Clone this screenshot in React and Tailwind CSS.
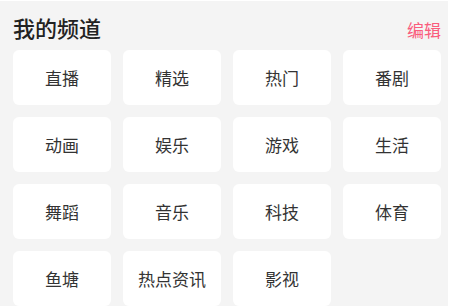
const channels = [
  "直播", "精选", "热门", "番剧",
  "动画", "娱乐", "游戏", "生活",
  "舞蹈", "音乐", "科技", "体育",
  "鱼塘", "热点资讯", "影视",
]

export default function App() {
  return (
    <div className="w-[450px] h-[308px] bg-white pt-[1px] pr-[2px] pb-[2px] overflow-hidden">
      <div
        className="h-full bg-[#f4f4f4] pl-[13px] pr-[7px] pt-[11px] overflow-hidden"
        style={{ fontFamily: '"Noto Sans CJK SC", "Noto Sans", sans-serif' }}
      >
        {/* header */}
        <div className="flex items-baseline justify-between">
          <h2 className="text-[22px] leading-[30px] font-medium text-[#222]">我的频道</h2>
          <button className="text-[17px] leading-[24px] text-[#fa5c7c]">编辑</button>
        </div>

        {/* channel grid */}
        <div className="mt-[8px] grid grid-cols-4 gap-x-[12px] gap-y-[12px]">
          {channels.map((name) => (
            <div
              key={name}
              className="h-[55px] bg-white rounded-[6px] flex items-center justify-center text-[17px] text-[#333]"
            >
              {name}
            </div>
          ))}
        </div>
      </div>
    </div>
  )
}
